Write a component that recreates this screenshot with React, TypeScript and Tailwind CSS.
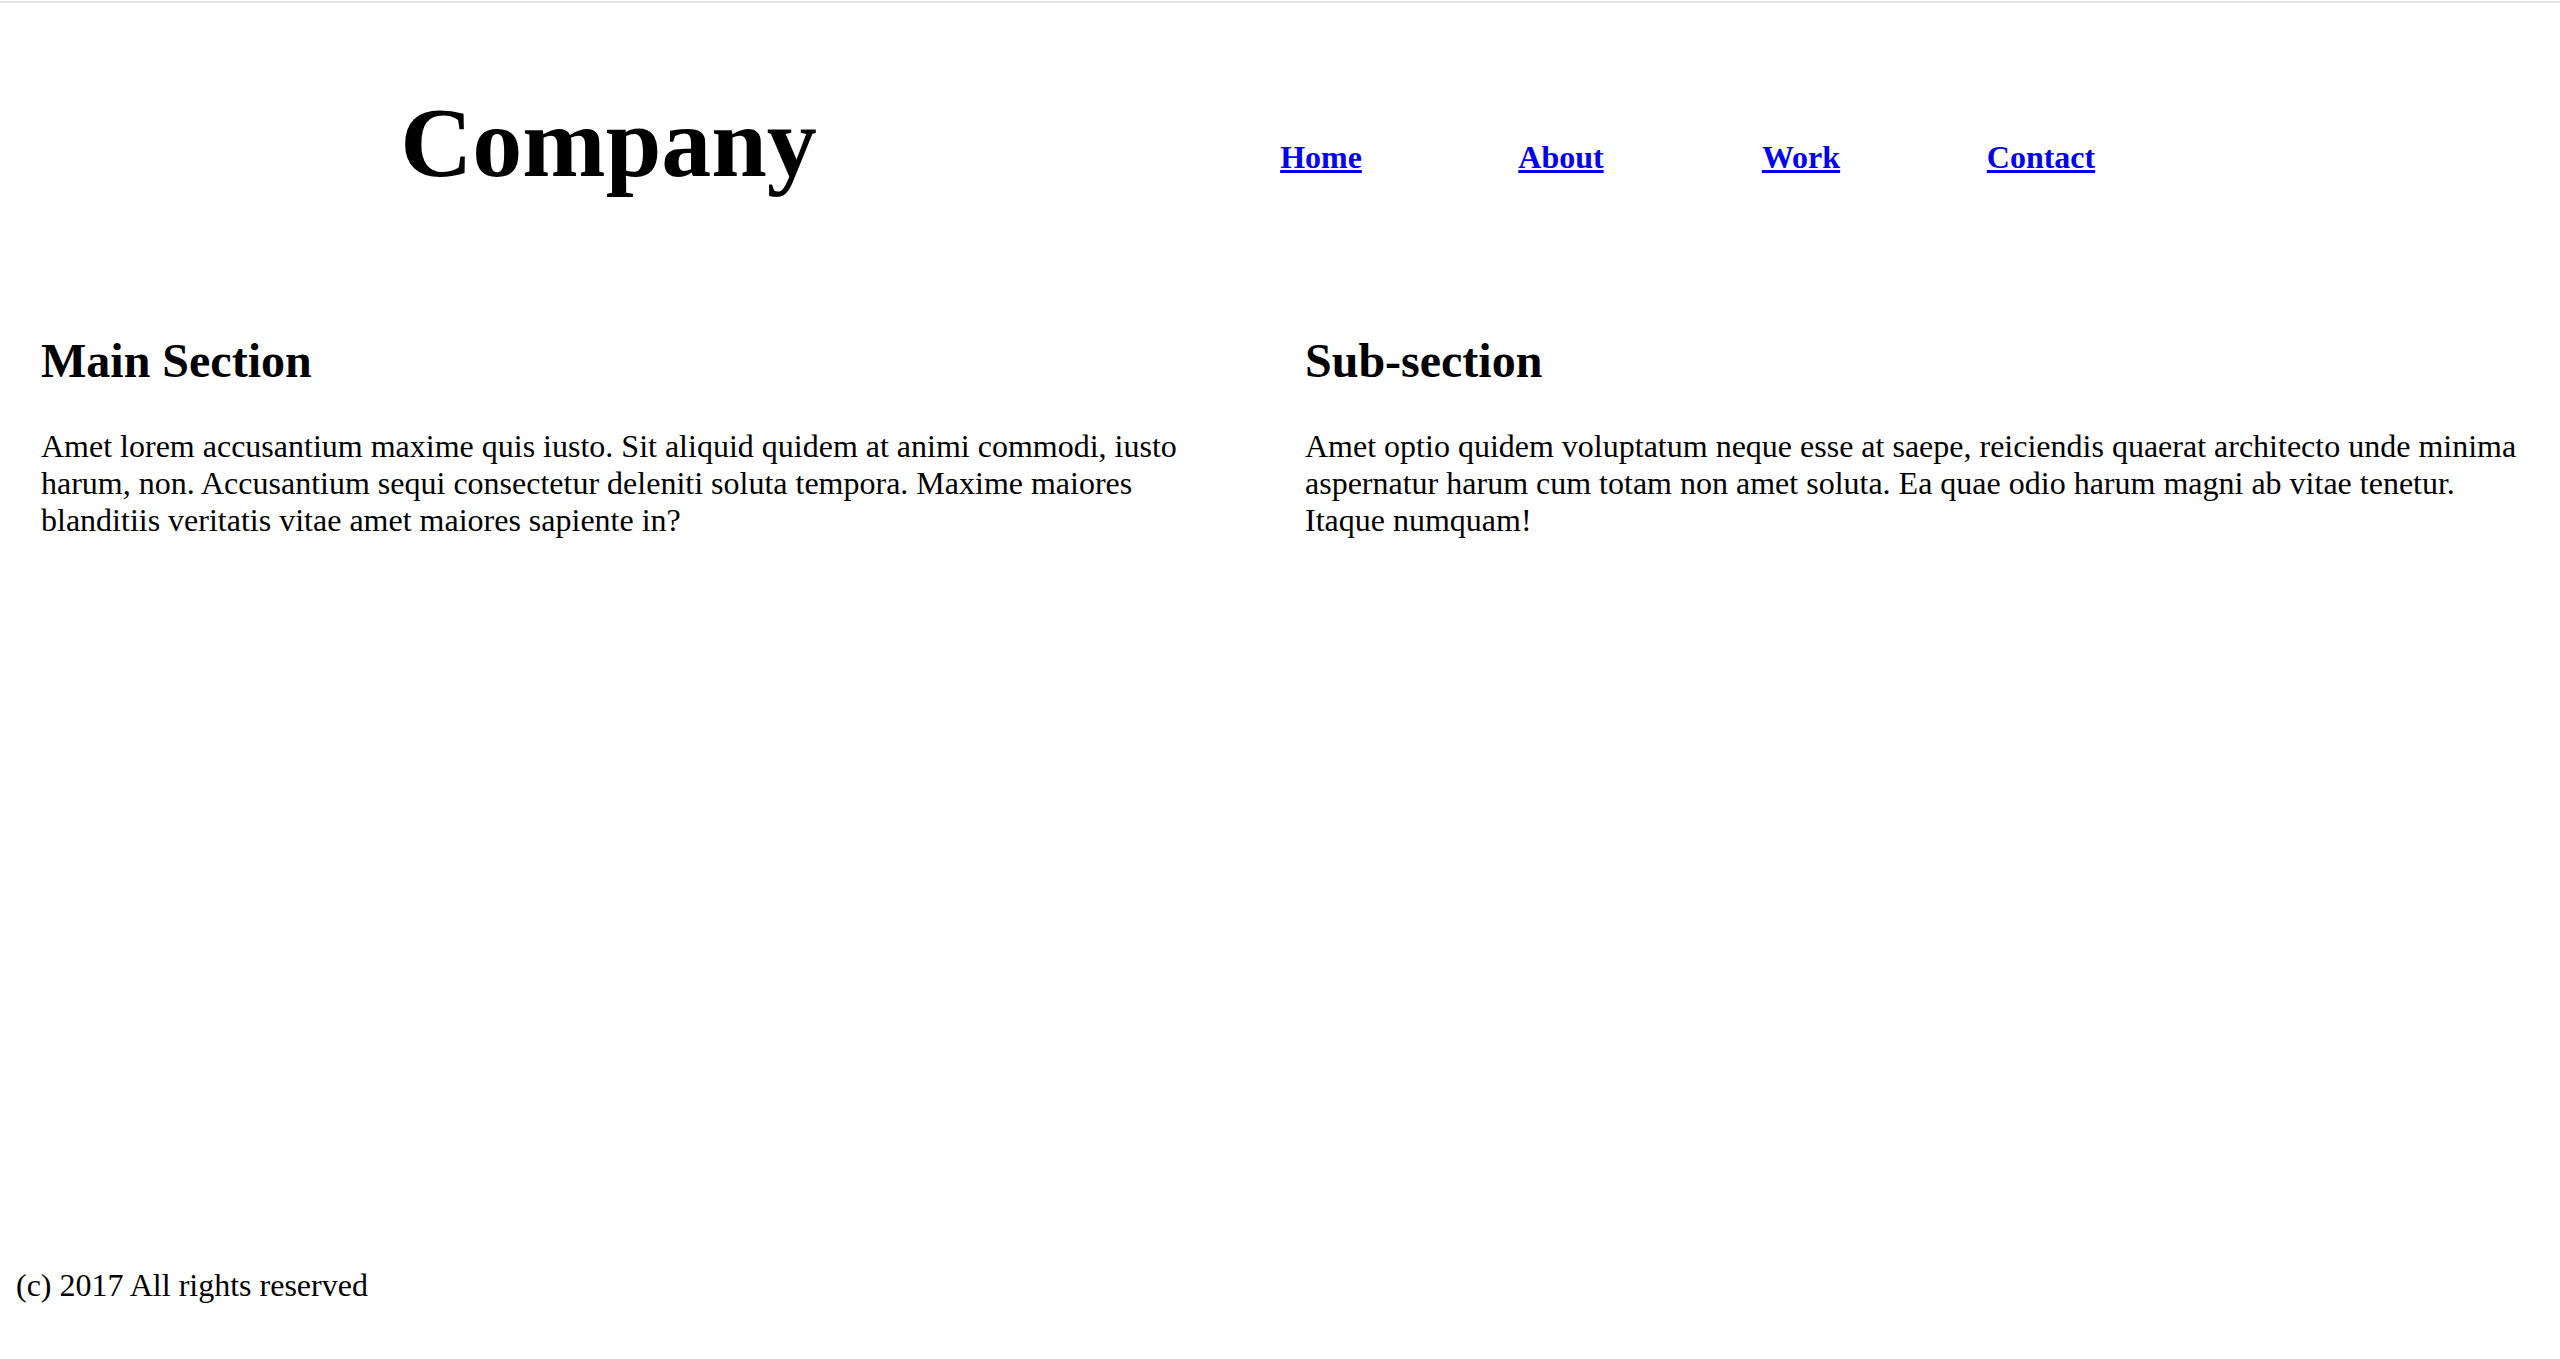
import React from "react";

const serif = { fontFamily: '"Liberation Serif", "Times New Roman", Times, serif' };

export default function App() {
  const links = ["Home", "About", "Work", "Contact"];
  return (
    <div
      className="flex min-h-screen w-full flex-col bg-white text-black font-['Liberation_Serif',_'Times_New_Roman',_serif]"
      style={serif}
    >
      <div className="h-[1px]" />
      <div className="h-[2px] bg-[#e4e4e4]" />
      <header className="flex items-start pl-[16px] pt-[85px]">
        <h1 className="w-[1185px] text-center text-[100px] font-bold leading-[110px]">Company</h1>
        <nav className="mt-[51px]">
          <ul className="flex">
            {links.map((l) => (
              <li key={l} className="w-[240px] text-center">
                <a
                  href="#"
                  className="text-[32px] font-bold leading-[36.8px] text-[#0000ee] underline decoration-[3px] underline-offset-[2px]"
                >
                  {l}
                </a>
              </li>
            ))}
          </ul>
        </nav>
      </header>
      <main className="flex flex-1 px-[16px] pt-[135px]">
        <section className="w-1/2 px-[25px]">
          <h2 className="mb-[40px] text-[48px] font-bold leading-[55px]">Main Section</h2>
          <p className="text-[32px] leading-[36.8px]">
            Amet lorem accusantium maxime quis iusto. Sit aliquid quidem at animi commodi, iusto harum, non.
            Accusantium sequi consectetur deleniti soluta tempora. Maxime maiores blanditiis veritatis vitae amet
            maiores sapiente in?
          </p>
        </section>
        <section className="w-1/2 px-[25px]">
          <h2 className="mb-[40px] text-[48px] font-bold leading-[55px]">Sub-section</h2>
          <p className="text-[32px] leading-[36.8px]">
            Amet optio quidem voluptatum neque esse at saepe, reiciendis quaerat architecto unde minima aspernatur
            harum cum totam non amet soluta. Ea quae odio harum magni ab vitae tenetur. Itaque numquam!
          </p>
        </section>
      </main>
      <footer className="px-[16px] pb-[55px]">
        <p className="text-[32px] leading-[36.8px]">(c) 2017 All rights reserved</p>
      </footer>
    </div>
  );
}
